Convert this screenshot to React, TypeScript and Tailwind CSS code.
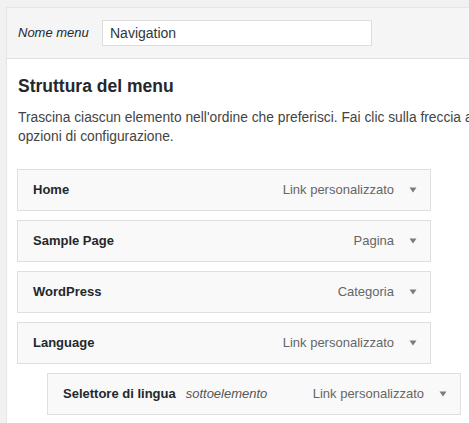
import React from 'react';

type MenuItem = {
  title: string;
  type: string;
  sub?: boolean;
};

const items: MenuItem[] = [
  { title: 'Home', type: 'Link personalizzato' },
  { title: 'Sample Page', type: 'Pagina' },
  { title: 'WordPress', type: 'Categoria' },
  { title: 'Language', type: 'Link personalizzato' },
  { title: 'Selettore di lingua', type: 'Link personalizzato', sub: true },
];

const Arrow = () => (
  <svg width="8" height="6" viewBox="0 0 8 6" className="shrink-0">
    <path d="M0.5 0.5 L7.5 0.5 L4 5.5 Z" fill="#787c82" />
  </svg>
);

const ItemBar: React.FC<{ item: MenuItem }> = ({ item }) => (
  <div className={`${item.sub ? 'ml-[30px]' : ''} w-[414px] h-[42px] flex items-center bg-[#f9f9f9] border border-[#dfdfdf] pl-[15px] pr-[13px]`}>
    <span className="font-semibold text-[13px] text-[#23282d]">{item.title}</span>
    {item.sub && (
      <span className="ml-[10px] italic text-[13px] text-[#555]">sottoelemento</span>
    )}
    <span className="ml-auto text-[13px] text-[#666]">{item.type}</span>
    <span className="ml-[15px] flex items-center">
      <Arrow />
    </span>
  </div>
);

export default function App() {
  return (
    <div
      className="w-[469px] h-[423px] overflow-hidden bg-[#f1f1f1] pl-[6px] pt-[7px]"
      style={{ fontFamily: '"Liberation Sans", Arial, sans-serif' }}
    >
      <div className="w-[600px] h-[500px] border border-[#e5e5e5] bg-white">
        <div className="h-[51px] bg-[#f5f5f5] border-b border-[#dfdfdf] flex items-center pl-[11px]">
          <span className="italic text-[13px] text-[#23282d] w-[84px]">Nome menu</span>
          <div className="w-[270px] h-[26px] bg-white border border-[#ddd] flex items-center pl-[7px] text-[14px] text-[#32373c]">
            Navigation
          </div>
        </div>
        <div className="pl-[11px] pt-[14px]">
          <h3 className="text-[17.5px] font-semibold text-[#23282d] leading-[26px]">Struttura del menu</h3>
          <p className="mt-[9px] text-[13.8px] leading-[19px] text-[#444] whitespace-nowrap">
            Trascina ciascun elemento nell'ordine che preferisci. Fai clic sulla freccia a
            <br />
            opzioni di configurazione.
          </p>
        </div>
        <div className="pl-[10px] pt-[23px] flex flex-col gap-[9px]">
          {items.map((it) => (
            <ItemBar key={it.title} item={it} />
          ))}
        </div>
      </div>
    </div>
  );
}
